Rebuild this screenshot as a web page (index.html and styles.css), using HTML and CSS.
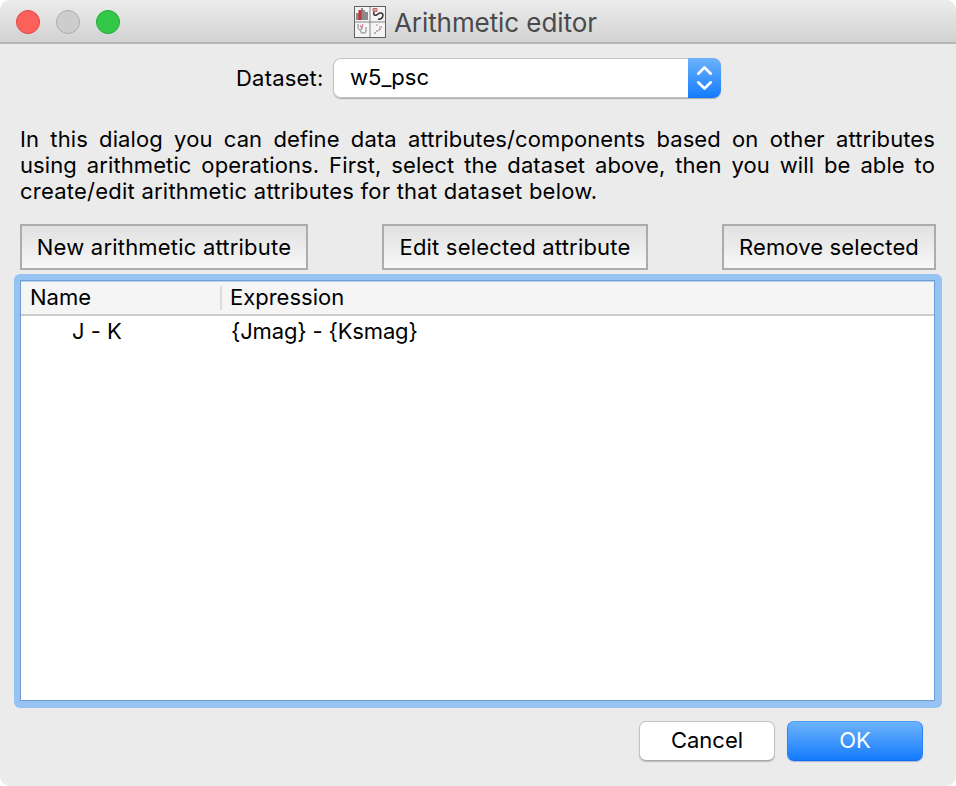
FILE: index.html
```html
<!DOCTYPE html>
<html lang="en">
<head>
<meta charset="utf-8">
<title>Arithmetic editor</title>
<link rel="stylesheet" href="styles.css">
</head>
<body>
<main class="window">
  <header class="titlebar">
    <div class="lights"><i class="light close"></i><i class="light minimize"></i><i class="light zoom"></i></div>
    <svg class="app-icon" width="32" height="32" viewBox="0 0 32 32" fill="none">
      <rect x=".5" y=".5" width="31" height="31" fill="#f4f4f4" stroke="#606060"/>
      <path d="M16 1v30M1 16h30" stroke="#858585"/>
      <path d="M2 7h3v7H2zM7 2h2v12H7zM9 4h2v10H9zM11 6h3v8h-3z" fill="#8a8a8a"/>
      <path d="M4.500 4h3v10h-3z" fill="#c5303b"/>
      <path d="M19 2.500h4v3h-4z" fill="#e39a9d" stroke="#c36b6e"/>
      <path d="M20 6c-1 4 2 4 4 2s5-1 5 1-2 5-5 4" stroke="#333" stroke-width="1.500"/>
      <path d="M4 18v3c0 3 2 3 4 2v-3M6 23c0 5 6 5 6 2v-4" stroke="#a0a0a0" stroke-width="1.300"/>
      <path d="M6 19l1.500 3 1.500-4" stroke="#d87078"/>
      <path d="M20 27h2m0-2h2m1-2h2m0-2h1" stroke="#777"/>
      <path d="M22 19h2m1 2h2m-3 3h2" stroke="#e07e85"/>
    </svg>
    <h1>Arithmetic editor</h1>
  </header>
  <div class="dataset">
    <label>Dataset:</label>
    <div class="select"><span>w5<b class="underscore">_</b>psc</span>
      <div class="stepper"><svg width="33" height="40" viewBox="0 0 33 40" fill="none" stroke="#fff" stroke-width="2.600" stroke-linecap="round" stroke-linejoin="round"><path d="M10.200 15.700l6.300-6.200 6.300 6.200M10.200 24.300l6.300 6.200 6.300-6.200"/></svg></div>
    </div>
  </div>
  <p class="intro"><span>In this dialog you can define data attributes/components based on other attributes</span><span>using arithmetic operations. First, select the dataset above, then you will be able to</span><span class="last">create/edit arithmetic attributes for that dataset below.</span></p>
  <div class="actions">
    <button class="flat new">New arithmetic attribute</button>
    <button class="flat edit">Edit selected attribute</button>
    <button class="flat remove">Remove selected</button>
  </div>
  <div class="focus-ring">
    <section class="table">
      <div class="row head"><span class="name">Name</span><span class="expr">Expression</span></div>
      <div class="row item"><span class="name">J - K</span><span class="expr">{Jmag} - {Ksmag}</span></div>
    </section>
  </div>
  <footer><button class="push">Cancel</button><button class="push primary">OK</button></footer>
</main>
</body>
</html>
```
FILE: styles.css
```css
* { box-sizing: border-box; }
body { margin: 0; background: #fff; font: 22px/26px Inter, "Liberation Sans", sans-serif; font-feature-settings: "calt" 0; color: #000; }
button { font: inherit; font-feature-settings: inherit; color: inherit; padding: 0; margin: 0; white-space: nowrap; }
.window { width: 956px; height: 786px; background: #ebebeb; border-radius: 10px; overflow: hidden; display: flex; flex-direction: column; }
.titlebar { position: relative; height: 44px; flex: none; display: flex; justify-content: center; align-items: center; gap: 8px; padding-right: 5px; background: linear-gradient(#ececec, #d2d2d2); border-bottom: 2px solid #b6b6b6; }
.lights { position: absolute; left: 16px; top: 10px; display: flex; gap: 16px; }
.light { width: 24px; height: 24px; border-radius: 50%; border: 1px solid; }
.close { background: #fc605b; border-color: #df4744; }
.minimize { background: #cdcdcd; border-color: #acacac; }
.zoom { background: #34c84a; border-color: #22a934; }
.app-icon { flex: none; margin-top: 1px; }
h1 { margin: 3px 0 0; font-size: 26px; line-height: 32px; font-weight: 400; color: #4a4a4a; white-space: nowrap; letter-spacing: -.08px; width: 203px; }
.dataset { display: flex; margin: 14px 0 0 236px; height: 40px; line-height: 40px; }
.dataset label { width: 97px; letter-spacing: .2px; }
.select { width: 388px; height: 40px; display: flex; justify-content: space-between; background: #fff; border-radius: 8px; box-shadow: inset 0 0 0 1px #c4c4c4, 0 1px 1px #aaa; overflow: hidden; }
.select span { padding-left: 17px; line-height: 38px; }
.underscore { font-family: Roboto, sans-serif; font-weight: 400; line-height: 1; }
.stepper { width: 33px; background: linear-gradient(#6cb3fa, #147bff); }
.stepper svg { display: block; }
.intro { margin: 28px 21px 0 20px; height: 78px; letter-spacing: .1px; }
.intro span { display: block; text-align: justify; text-align-last: justify; }
.intro .last { text-align-last: left; letter-spacing: .23px; }
.actions { margin: 20px 20px 0; height: 46px; display: flex; justify-content: space-between; flex: none; }
.flat { height: 46px; border: 2px solid #acacac; background: linear-gradient(#e1e1e1, #f7f7f7); letter-spacing: .2px; }
.new { width: 288px; }
.edit { width: 266px; }
.remove { width: 214px; letter-spacing: .12px; }
.focus-ring { margin: 4px 14px 0; height: 434px; flex: none; padding: 6px 7px 7px 6px; background: #97c3f3; border-radius: 6px; }
.table { height: 421px; background: #fff; border: 1px solid #6c9dd4; }
.row { display: flex; height: 34px; line-height: 31px; }
.head { height: 35px; background: #f5f5f5; border-top: 1px solid #b9d3f0; border-bottom: 2px solid #cbcbcb; }
.head .name { width: 201px; padding-left: 9px; height: 24px; margin-top: 4px; line-height: 23px; border-right: 2px solid #dcdcdc; }
.head .expr { padding-left: 8px; line-height: 31px; }
.item .name { width: 210px; padding-left: 51px; }
.item .expr { letter-spacing: -.16px; }
footer { display: flex; justify-content: flex-end; gap: 12px; margin: 13px 33px 0 0; }
.push { width: 136px; height: 40px; padding-bottom: 2px; border: 1px solid #c4c4c4; border-bottom-color: #aaa; border-radius: 7px; background: #fff; box-shadow: 0 1px 1px #bbb; }
.primary { color: #fff; background: linear-gradient(#6cb3fa, #147bff); border-color: #4c9df5 #2b83f6 #1268f5; box-shadow: 0 1px 1px #aab8d4; }
```
